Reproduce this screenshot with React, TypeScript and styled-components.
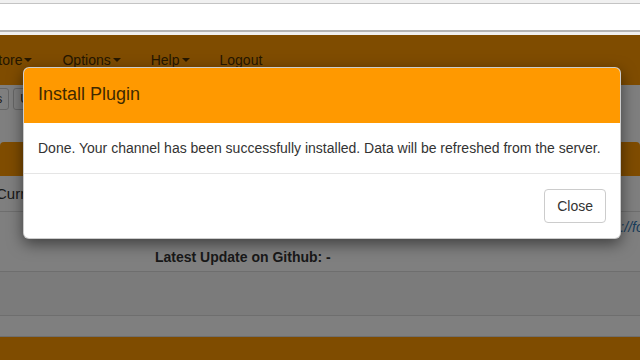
import React from "react";
import styled, { createGlobalStyle } from "styled-components";

const GlobalStyle = createGlobalStyle`
  html, body {
    margin: 0;
    padding: 0;
    width: 640px;
    height: 360px;
    overflow: hidden;
    background: #ffffff;
  }
  body {
    font-family: "Liberation Sans", Arial, sans-serif;
    font-size: 14px;
    line-height: 20px;
    color: #333333;
  }
  * { box-sizing: border-box; }
`;

// strip above the page, not covered by the backdrop
const TopStrip = styled.div`
  height: 35px;
  background: #f0f0f0;
  padding-top: 3px;
`;

const AddressField = styled.div`
  height: 29px;
  background: #ffffff;
  border-top: 1px solid #c4c4c4;
  border-bottom: 2px solid #b4b4b4;
`;

const Page = styled.div`
  position: relative;
  height: 325px;
  overflow: hidden;
  background: #ffffff;
`;

const Navbar = styled.nav`
  height: 50px;
  background: #ff9900;
  display: flex;
  align-items: center;
  margin-left: -26px;
`;

const NavLink = styled.span`
  padding: 0 15px;
  color: #4a2f00;
  font-size: 14px;
  white-space: nowrap;
  display: flex;
  align-items: center;
`;

const Caret = styled.span`
  display: inline-block;
  width: 0;
  height: 0;
  margin-left: 2px;
  border-top: 4px solid #4a2f00;
  border-left: 4px solid transparent;
  border-right: 4px solid transparent;
`;

const Toolbar = styled.div`
  height: 57px;
  padding-top: 3px;
  display: flex;
  gap: 4px;
  margin-left: -44px;
`;

const SmallButton = styled.span`
  height: 22px;
  padding: 1px 6px;
  border: 1px solid #cccccc;
  border-radius: 3px;
  background: #ffffff;
  color: #333333;
  font-size: 12px;
  line-height: 18px;
  white-space: nowrap;
`;

const PanelHeading = styled.div`
  height: 34px;
  background: #ff9900;
  border-radius: 4px 4px 0 0;
`;

const HeadRow = styled.div`
  height: 36px;
  display: flex;
  align-items: center;
  font-size: 15px;
  border-bottom: 1px solid #dddddd;
  margin-left: -4px;
  white-space: nowrap;
`;

const InfoRow = styled.div`
  height: 60px;
  padding-top: 5px;
  border-bottom: 1px solid #dddddd;
`;

const LinkLine = styled.div`
  padding-left: 590px;
  color: #337ab7;
  font-style: italic;
  white-space: nowrap;
  height: 30px;
`;

const BoldLine = styled.div`
  padding-left: 155px;
  font-weight: bold;
  white-space: nowrap;
`;

const EmptyRow = styled.div<{ $h: number; $striped?: boolean }>`
  height: ${(p) => p.$h}px;
  background: ${(p) => (p.$striped ? "#f6f6f6" : "#ffffff")};
  border-bottom: 1px solid #dddddd;
`;

const Footer = styled.div`
  height: 30px;
  background: #ff9900;
`;

const Backdrop = styled.div`
  position: absolute;
  inset: 0;
  background: rgba(0, 0, 0, 0.5);
  padding: 32px 0 0 23px;
`;

const Modal = styled.div`
  width: 598px;
  background: #ffffff;
  border: 1px solid rgba(0, 0, 0, 0.2);
  border-radius: 6px;
  box-shadow: 0 5px 15px rgba(0, 0, 0, 0.5);
  overflow: hidden;
`;

const ModalHeader = styled.div`
  background: #ff9900;
  padding: 14px 14px 15px;
  height: 55px;
`;

const ModalTitle = styled.h4`
  margin: 0;
  font-size: 18px;
  font-weight: normal;
  line-height: 25px;
  color: #3f2a00;
`;

const ModalBody = styled.div`
  padding: 15px 14px;
  height: 50px;
  white-space: nowrap;
`;

const ModalFooter = styled.div`
  border-top: 1px solid #e5e5e5;
  padding: 15px 14px 15px;
  display: flex;
  justify-content: flex-end;
`;

const Button = styled.button`
  height: 34px;
  padding: 6px 12px;
  font-family: "Liberation Sans", Arial, sans-serif;
  font-size: 14px;
  line-height: 20px;
  color: #333333;
  background: #ffffff;
  border: 1px solid #cccccc;
  border-radius: 4px;
`;

export default function App() {
  return (
    <>
      <GlobalStyle />
      <TopStrip>
        <AddressField />
      </TopStrip>
      <Page>
        <Navbar>
          <NavLink>
            Store
            <Caret />
          </NavLink>
          <NavLink>
            Options
            <Caret />
          </NavLink>
          <NavLink>
            Help
            <Caret />
          </NavLink>
          <NavLink>Logout</NavLink>
        </Navbar>
        <Toolbar>
          <SmallButton>Plugins</SmallButton>
          <SmallButton>Update</SmallButton>
        </Toolbar>
        <PanelHeading />
        <HeadRow>Current Version</HeadRow>
        <InfoRow>
          <LinkLine>https://forum.fhem.de</LinkLine>
          <BoldLine>Latest Update on Github: -</BoldLine>
        </InfoRow>
        <EmptyRow $h={44} $striped />
        <EmptyRow $h={21} />
        <Footer />
        <Backdrop>
          <Modal>
            <ModalHeader>
              <ModalTitle>Install Plugin</ModalTitle>
            </ModalHeader>
            <ModalBody>
              Done. Your channel has been successfully installed. Data will be
              refreshed from the server.
            </ModalBody>
            <ModalFooter>
              <Button>Close</Button>
            </ModalFooter>
          </Modal>
        </Backdrop>
      </Page>
    </>
  );
}
